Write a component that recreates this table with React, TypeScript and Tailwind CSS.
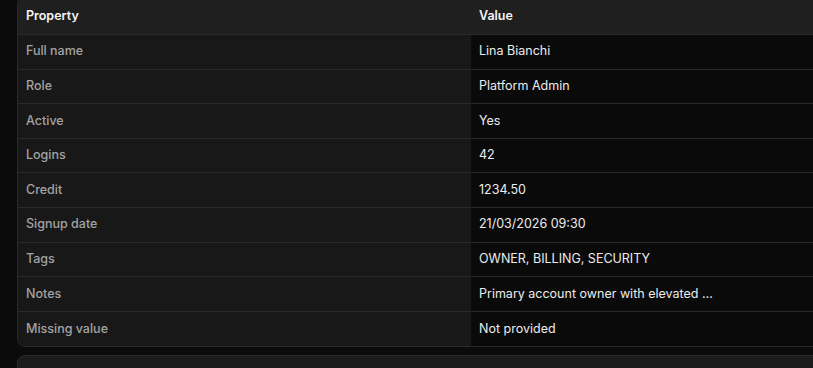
const rows: [string, string][] = [
  ["Full name", "Lina Bianchi"],
  ["Role", "Platform Admin"],
  ["Active", "Yes"],
  ["Logins", "42"],
  ["Credit", "1234.50"],
  ["Signup date", "21/03/2026 09:30"],
  ["Tags", "OWNER, BILLING, SECURITY"],
  ["Notes", "Primary account owner with elevated …"],
  ["Missing value", "Not provided"],
];

export default function App() {
  return (
    <div className="h-[368px] w-[813px] overflow-hidden bg-[#0b0b0b] font-['Inter',sans-serif] text-[12.5px]">
      <div className="ml-[17px] mt-[-4px] flex w-[830px] flex-col gap-2">
        {/* Properties table */}
        <div className="overflow-hidden rounded-lg border border-[#2a2a2a]">
          <div className="grid h-[38px] grid-cols-[453px_1fr] items-center border-b border-[#2a2a2a] bg-[#1f1f1f] font-semibold text-[#f5f5f5]">
            <div className="px-2 pt-[1px]">Property</div>
            <div className="px-2 pt-[1px]">Value</div>
          </div>
          {rows.map(([k, v], i) => (
            <div
              key={k}
              className={`grid h-[34.6px] grid-cols-[453px_1fr] ${i < rows.length - 1 ? "border-b border-[#2a2a2a]" : ""}`}
            >
              <div className="flex items-center bg-[#181818] px-2 font-medium text-[#a3a3a3]">{k}</div>
              <div className="flex items-center bg-[#0a0a0a] px-2 text-[#ececec]">{v}</div>
            </div>
          ))}
        </div>

        {/* Next panel */}
        <div className="h-[60px] rounded-lg border border-[#2a2a2a] bg-[#1c1c1c]" />
      </div>
    </div>
  );
}
